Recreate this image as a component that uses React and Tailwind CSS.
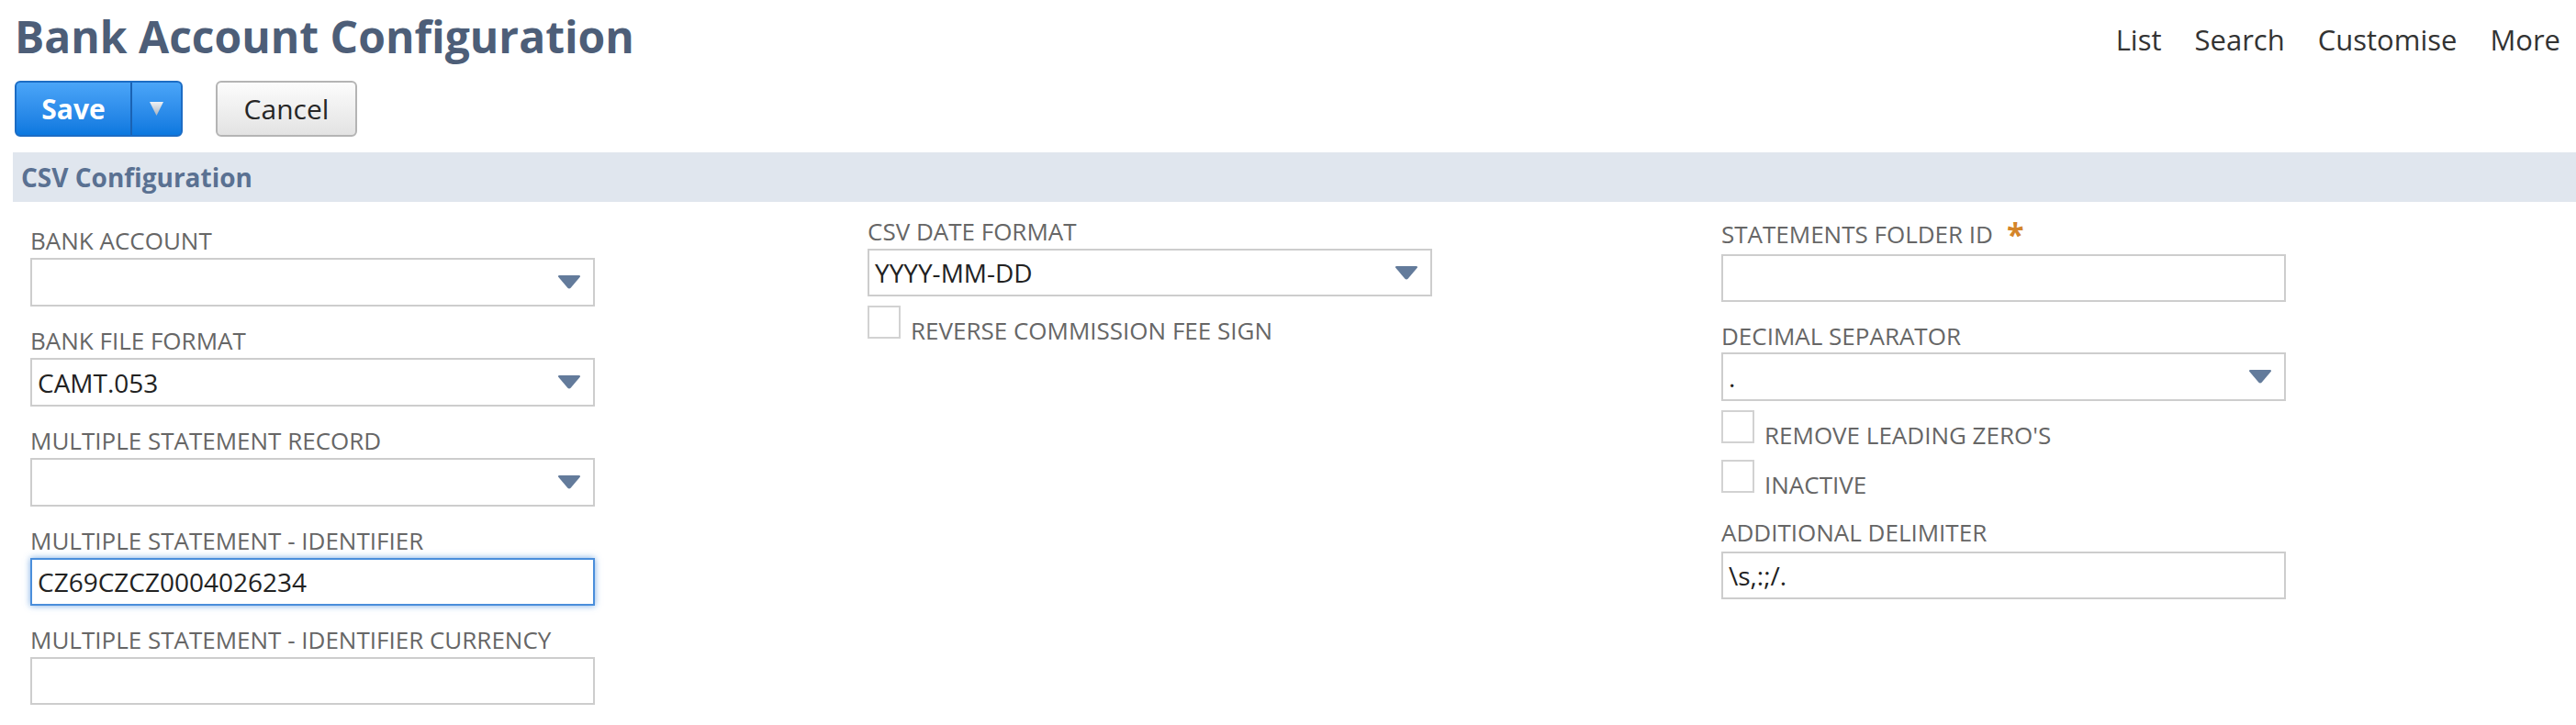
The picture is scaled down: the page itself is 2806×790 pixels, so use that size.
import React from 'react';

const Caret = () => (
    <svg width="26" height="15" viewBox="0 0 26 15" className="shrink-0">
        <path d="M1.2 1.8 Q0.4 0 2.4 0 H23.6 Q25.6 0 24.8 1.8 L14.6 13.8 Q13 15.4 11.4 13.8 Z" fill="#637b9b" />
    </svg>
);

const Label = ({ children, className = '' }) => (
    <div className={`text-[26px] leading-[30px] text-[#666] whitespace-nowrap ${className}`}>{children}</div>
);

const Box = ({ value, select, focused, className = '' }) => (
    <div
        className={`w-[615px] bg-white border-2 flex items-center justify-between pl-[6px] pr-[13px] text-[28px] text-[#222] whitespace-nowrap ${
            focused ? 'border-[#4a8edb] shadow-[0_0_7px_rgba(74,142,219,0.75)]' : 'border-[#cdcdcd]'
        } ${className}`}
    >
        <span>{value}</span>
        {select && <Caret />}
    </div>
);

const Check = ({ label, className = '' }) => (
    <div className={`flex items-start h-[36px] ${className}`}>
        <div className="w-[36px] h-[36px] border-2 border-[#d2d2d2] bg-white shrink-0" />
        <div className="ml-[11px] mt-[12px] text-[26px] leading-[30px] text-[#666] whitespace-nowrap">{label}</div>
    </div>
);

export default function App() {
    return (
        <div className="w-[2806px] h-[790px] bg-white overflow-hidden font-['Open_Sans',sans-serif]">
            {/* page title + nav */}
            <div className="flex justify-between items-start h-[88px]">
                <h1 className="pl-[16px] pt-[10px] text-[48px] leading-[60px] font-bold text-[#4d5e78]">
                    Bank Account Configuration
                </h1>
                <div className="flex gap-[36px] pr-[17px] pt-[23px] text-[31px] leading-[40px] text-[#333]">
                    <span>List</span>
                    <span>Search</span>
                    <span>Customise</span>
                    <span>More</span>
                </div>
            </div>

            {/* buttons */}
            <div className="flex gap-[36px] pl-[16px] h-[61px]">
                <div className="flex w-[183px] h-[61px] rounded-[6px] border-2 border-[#1c6cc4] bg-linear-to-b from-[#4aa5f8] to-[#0a78df] overflow-hidden">
                    <div className="w-[124px] flex items-center justify-center text-white text-[30px] font-bold">Save</div>
                    <div className="w-[2px] bg-[#1a62b3]" />
                    <div className="flex-1 flex items-center justify-center">
                        <svg width="15" height="15" viewBox="0 0 15 15">
                            <defs>
                                <linearGradient id="arr" x1="0" y1="0" x2="0" y2="1">
                                    <stop offset="0" stopColor="#eef1f5" />
                                    <stop offset="1" stopColor="#a9b3bf" />
                                </linearGradient>
                            </defs>
                            <path d="M0 0 H15 L7.5 15 Z" fill="url(#arr)" />
                        </svg>
                    </div>
                </div>
                <div className="w-[154px] h-[61px] rounded-[6px] border-2 border-[#b4b4b4] bg-linear-to-b from-[#fcfcfc] to-[#e3e3e3] flex items-center justify-center text-[30px] text-[#262626]">
                    Cancel
                </div>
            </div>

            {/* section header */}
            <div className="mt-[17px] ml-[14px] h-[54px] bg-[#e0e6ee] pl-[9px] text-[28px] leading-[54px] font-bold text-[#5a7192]">
                CSV Configuration
            </div>

            {/* form */}
            <div className="flex pl-[33px]">
                <div className="w-[912px] pt-[27px] shrink-0">
                    <Label>BANK ACCOUNT</Label>
                    <Box select className="mt-[4px] h-[53px]" />
                    <Label className="mt-[22px]">BANK FILE FORMAT</Label>
                    <Box select value="CAMT.053" className="mt-[4px] h-[53px]" />
                    <Label className="mt-[22px]">MULTIPLE STATEMENT RECORD</Label>
                    <Box select className="mt-[4px] h-[53px]" />
                    <Label className="mt-[22px]">MULTIPLE STATEMENT - IDENTIFIER</Label>
                    <Box focused value="CZ69CZCZ0004026234" className="mt-[4px] h-[52px]" />
                    <Label className="mt-[22px]">MULTIPLE STATEMENT - IDENTIFIER CURRENCY</Label>
                    <Box className="mt-[4px] h-[52px]" />
                </div>

                <div className="w-[930px] pt-[17px] shrink-0">
                    <Label>CSV DATE FORMAT</Label>
                    <Box select value="YYYY-MM-DD" className="mt-[4px] h-[52px]" />
                    <Check label="REVERSE COMMISSION FEE SIGN" className="mt-[10px]" />
                </div>

                <div className="pt-[20px]">
                    <Label className="flex items-start">
                        STATEMENTS FOLDER ID
                        <span className="ml-[15px] text-[34px] leading-[30px] font-bold text-[#d4852a]">*</span>
                    </Label>
                    <Box className="mt-[7px] h-[52px]" />
                    <Label className="mt-[22px]">DECIMAL SEPARATOR</Label>
                    <Box select value="." className="mt-[3px] h-[53px]" />
                    <Check label="REMOVE LEADING ZERO'S" className="mt-[10px]" />
                    <Check label="INACTIVE" className="mt-[18px]" />
                    <Label className="mt-[28px]">ADDITIONAL DELIMITER</Label>
                    <Box value="\s,:;/." className="mt-[6px] h-[52px] pl-[1px]" />
                </div>
            </div>
        </div>
    );
}
